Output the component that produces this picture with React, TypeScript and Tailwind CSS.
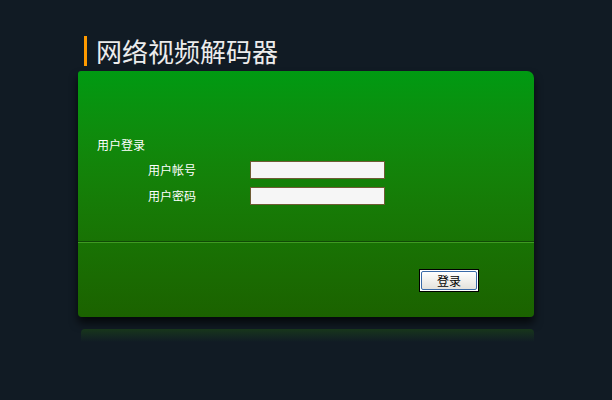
import React from 'react';

const cjk = { fontFamily: '"Noto Sans CJK SC", "Noto Sans", sans-serif' };

const Field: React.FC<{ label: string; type?: string }> = ({ label, type = 'text' }) => (
    <div className="flex items-center h-[18px]">
        <span className="ml-[51px] w-[102px] text-[12px] leading-[16px] text-white">{label}</span>
        <input
            type={type}
            className="w-[135px] h-[18px] bg-[#f6f6f6] border border-[#6e5c34] outline-none"
        />
    </div>
);

const App: React.FC = () => {
    return (
        <div className="w-[612px] h-[400px] bg-[#111b24] overflow-hidden" style={cjk}>
            <div className="pl-[78px] pt-[36px] w-[534px]">
                <div className="flex items-center ml-[6px] h-[30px]">
                    <div className="w-[3px] h-[30px] bg-[#ff9a00]" />
                    <h1 className="ml-[9px] text-[26px] leading-[30px] text-[#ececec]">网络视频解码器</h1>
                </div>

                <div className="mt-[5px] h-[246px] rounded-tl-[3px] rounded-tr-[7px] rounded-b-[4px] bg-gradient-to-b from-[#009a12] to-[#1b6200] shadow-[0_6px_8px_rgba(0,0,0,0.7)]">
                    <div className="h-[170px] pt-[66px] pl-[19px]">
                        <div className="text-[12px] leading-[16px] text-white">用户登录</div>
                        <div className="mt-[8px] flex flex-col gap-[8px]">
                            <Field label="用户帐号" />
                            <Field label="用户密码" type="password" />
                        </div>
                    </div>
                    <div className="h-[1px] bg-[#104a06]" />
                    <div className="h-[1px] bg-[#3f9a22]" />
                    <div className="flex justify-end pr-[55px] pt-[26px]">
                        <button className="w-[60px] h-[23px] border border-black bg-white p-[1px]">
                            <span className="flex items-center justify-center w-full h-full border border-[#3a6aa8] rounded-[2px] bg-gradient-to-b from-white to-[#e4e2dc] text-[12px] leading-none text-black">
                                登录
                            </span>
                        </button>
                    </div>
                </div>

                <div className="mt-[12px] ml-[3px] h-[13px] rounded-t-[4px] bg-gradient-to-b from-[#17361a] to-[#111b24]" />
            </div>
        </div>
    );
};

export default App;
